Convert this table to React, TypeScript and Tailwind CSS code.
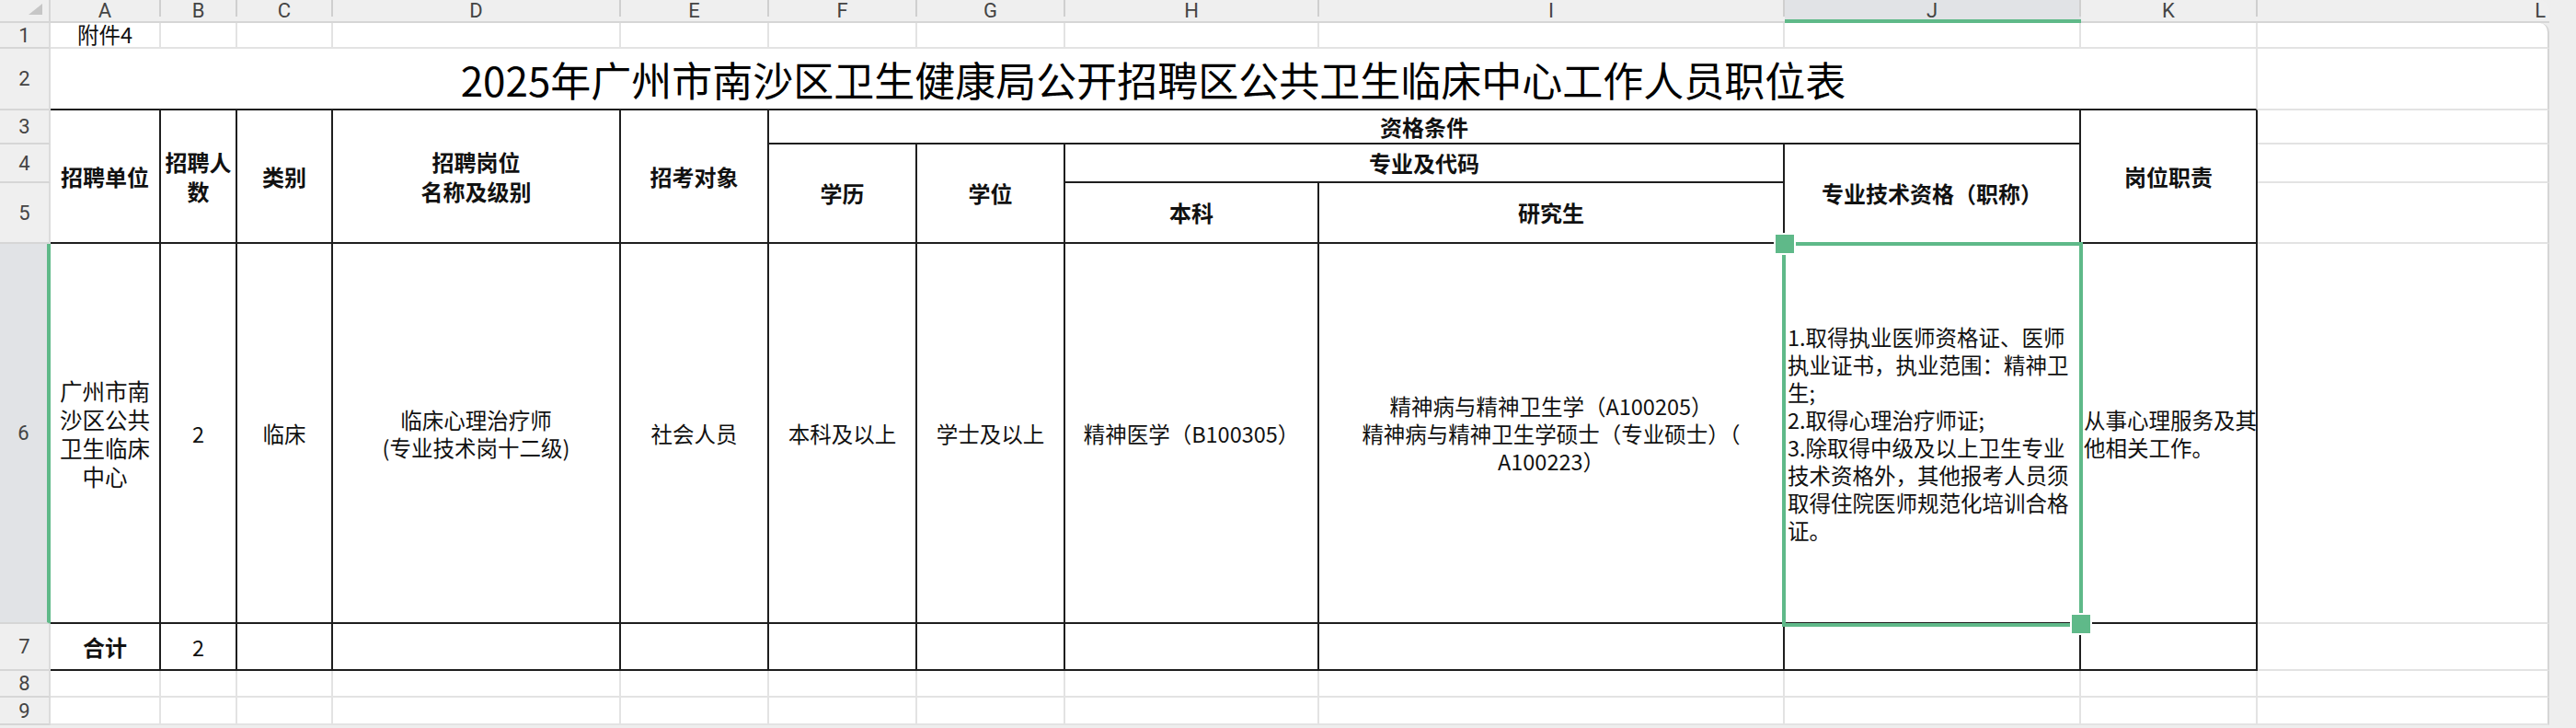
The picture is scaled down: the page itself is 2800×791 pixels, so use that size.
import React from 'react';

const colStart = ['', 'col-start-1', 'col-start-2', 'col-start-3', 'col-start-4', 'col-start-5', 'col-start-6', 'col-start-7', 'col-start-8', 'col-start-9', 'col-start-10', 'col-start-11', 'col-start-12', 'col-start-13', 'col-start-14'];
const rowStart = ['', 'row-start-1', 'row-start-2', 'row-start-3', 'row-start-4', 'row-start-5', 'row-start-6', 'row-start-7', 'row-start-8', 'row-start-9', 'row-start-10', 'row-start-11'];
const colSpan = ['', 'col-span-1', 'col-span-2', 'col-span-3', 'col-span-4', 'col-span-5', 'col-span-6', 'col-span-7', 'col-span-8', 'col-span-9', 'col-span-10', 'col-span-11'];
const rowSpan = ['', 'row-span-1', 'row-span-2', 'row-span-3'];

const letters = ['A', 'B', 'C', 'D', 'E', 'F', 'G', 'H', 'I', 'J', 'K', 'L'];

const head = 'font-bold text-[24px] leading-[32px] text-[#111]';
const data = 'text-[23.5px] leading-[30px] text-[#111]';

type CellProps = {
  c: number;
  r: number;
  cs?: number;
  rs?: number;
  edge?: 'black' | 'grid' | 'title';
  className?: string;
  children?: React.ReactNode;
};

const Cell: React.FC<CellProps> = ({ c, r, cs = 1, rs = 1, edge = 'grid', className = '', children }) => {
  const lines =
    edge === 'black'
      ? 'border-r-2 border-b-2 border-[#1e1e1e]'
      : edge === 'title'
      ? 'border-r-2 border-b-2 border-r-[#e3e3e3] border-b-[#1e1e1e]'
      : 'border-r-2 border-b-2 border-[#e3e3e3]';
  return (
    <div
      className={`${colStart[c]} ${rowStart[r]} ${colSpan[cs]} ${rowSpan[rs]} flex flex-col items-center justify-center text-center bg-white ${lines} ${className}`}
    >
      {children}
    </div>
  );
};

// last visible column (L), cut by the sheet edge
const EdgeCell: React.FC<{ r: number; first?: boolean }> = ({ r, first }) => (
  <div
    className={`col-start-13 ${rowStart[r]} bg-white border-r-2 border-b-2 border-r-[#d5d5d5] border-b-[#e3e3e3] ${
      first ? 'rounded-tr-[10px]' : ''
    }`}
  />
);

const App: React.FC = () => {
  const empty = (r: number, from: number, to: number, edge: 'black' | 'grid') => {
    const out = [];
    for (let c = from; c <= to; c++) out.push(<Cell key={`e-${r}-${c}`} c={c} r={r} edge={edge} />);
    return out;
  };

  return (
    <div className="w-[2800px] h-[791px] overflow-hidden bg-[#eeeeee] grid grid-cols-[55px_120px_83px_104px_313px_161px_161px_161px_276px_506px_322px_192px_317px_29px] grid-rows-[25px_28px_67px_37px_42px_66px_413px_51px_29px_30px_3px] font-['Noto_Sans_CJK_SC','Noto_Sans',sans-serif]">
      {/* corner */}
      <div className="col-start-1 row-start-1 flex items-end justify-end pr-[7px] pb-[7px] bg-[#efefef] border-r-2 border-b-2 border-[#d6d6d6]">
        <svg width="15" height="12" viewBox="0 0 15 12">
          <polygon points="15,0 15,12 0,12" fill="#c6c6c6" />
        </svg>
      </div>

      {/* column letters */}
      {letters.map((l, i) => {
        const selected = l === 'J';
        const last = l === 'L';
        return (
          <div
            key={l}
            className={`${colStart[i + 2]} row-start-1 flex ${
              selected ? 'bg-[#e1e3e6] border-b-4 border-[#5fb989]' : 'bg-[#efefef] border-b-2 border-[#d6d6d6]'
            } ${last ? 'rounded-tr-[10px]' : ''} font-['Roboto',sans-serif] text-[22px] leading-[23px] text-[#444]`}
          >
            <span className={`flex-1 ${last ? 'text-right pr-[4px]' : 'text-center'}`}>{l}</span>
            {!last && <div className="w-[2px] h-[18px] bg-[#cfcfcf]" />}
          </div>
        );
      })}

      {/* row numbers */}
      {[1, 2, 3, 4, 5, 6, 7, 8, 9].map((n) => (
        <div
          key={n}
          className={`col-start-1 ${rowStart[n + 1]} flex items-center justify-center border-b-2 border-b-[#d6d6d6] font-['Roboto',sans-serif] text-[22px] text-[#444] ${
            n === 6 ? 'bg-[#e1e3e6] border-r-4 border-r-[#5fb989]' : 'bg-[#efefef] border-r-2 border-r-[#dcdcdc]'
          }`}
        >
          {n}
        </div>
      ))}

      {/* row 1 */}
      <Cell c={2} r={2} className="text-[23.5px] text-[#111]">附件4</Cell>
      {empty(2, 3, 12, 'grid')}
      <EdgeCell r={2} first />

      {/* row 2 title */}
      <Cell c={2} r={3} cs={11} edge="title" className="text-[44px] leading-[50px] text-black">
        2025年广州市南沙区卫生健康局公开招聘区公共卫生临床中心工作人员职位表
      </Cell>
      <EdgeCell r={3} />

      {/* rows 3-5 header */}
      <Cell c={2} r={4} rs={3} edge="black" className={head}>招聘单位</Cell>
      <Cell c={3} r={4} rs={3} edge="black" className={head}>
        <span>招聘人</span>
        <span>数</span>
      </Cell>
      <Cell c={4} r={4} rs={3} edge="black" className={head}>类别</Cell>
      <Cell c={5} r={4} rs={3} edge="black" className={head}>
        <span>招聘岗位</span>
        <span>名称及级别</span>
      </Cell>
      <Cell c={6} r={4} rs={3} edge="black" className={head}>招考对象</Cell>
      <Cell c={7} r={4} cs={5} edge="black" className={head}>资格条件</Cell>
      <Cell c={12} r={4} rs={3} edge="black" className={head}>岗位职责</Cell>
      <Cell c={7} r={5} rs={2} edge="black" className={head}>学历</Cell>
      <Cell c={8} r={5} rs={2} edge="black" className={head}>学位</Cell>
      <Cell c={9} r={5} cs={2} edge="black" className={head}>专业及代码</Cell>
      <Cell c={11} r={5} rs={2} edge="black" className={head}>专业技术资格（职称）</Cell>
      <Cell c={9} r={6} edge="black" className={head}>本科</Cell>
      <Cell c={10} r={6} edge="black" className={head}>研究生</Cell>
      <EdgeCell r={4} />
      <EdgeCell r={5} />
      <EdgeCell r={6} />

      {/* row 6 data */}
      <Cell c={2} r={7} edge="black" className="text-[24.5px] leading-[31px] text-[#111]">
        <span>广州市南</span>
        <span>沙区公共</span>
        <span>卫生临床</span>
        <span>中心</span>
      </Cell>
      <Cell c={3} r={7} edge="black" className={data}>2</Cell>
      <Cell c={4} r={7} edge="black" className={data}>临床</Cell>
      <Cell c={5} r={7} edge="black" className={data}>
        <span>临床心理治疗师</span>
        <span>(专业技术岗十二级)</span>
      </Cell>
      <Cell c={6} r={7} edge="black" className={data}>社会人员</Cell>
      <Cell c={7} r={7} edge="black" className={data}>本科及以上</Cell>
      <Cell c={8} r={7} edge="black" className={data}>学士及以上</Cell>
      <Cell c={9} r={7} edge="black" className={`${data} whitespace-nowrap`}>精神医学（B100305）</Cell>
      <Cell c={10} r={7} edge="black" className={`${data} whitespace-nowrap`}>
        <span>精神病与精神卫生学（A100205）</span>
        <span>精神病与精神卫生学硕士（专业硕士）（</span>
        <span>A100223）</span>
      </Cell>
      <Cell c={11} r={7} edge="black" className={`${data} relative !items-start text-left pl-[3px] whitespace-nowrap`}>
        <span>1.取得执业医师资格证、医师</span>
        <span>执业证书，执业范围：精神卫</span>
        <span>生;</span>
        <span>2.取得心理治疗师证;</span>
        <span>3.除取得中级及以上卫生专业</span>
        <span>技术资格外，其他报考人员须</span>
        <span>取得住院医师规范化培训合格</span>
        <span>证。</span>
        {/* selection frame */}
        <div className="absolute -left-[3px] -top-[2px] -right-[4px] -bottom-[5px] border-4 border-[#5fb989] z-10 pointer-events-none" />
        <div className="absolute -left-[12px] -top-[12px] w-[24px] h-[24px] bg-[#5fb989] border-2 border-white z-20" />
        <div className="absolute -right-[14px] -bottom-[14px] w-[24px] h-[24px] bg-[#5fb989] border-2 border-white z-20" />
      </Cell>
      <Cell c={12} r={7} edge="black" className={`${data} !items-start text-left pl-[3px] whitespace-nowrap`}>
        <span>从事心理服务及其</span>
        <span>他相关工作。</span>
      </Cell>
      <EdgeCell r={7} />

      {/* row 7 total */}
      <Cell c={2} r={8} edge="black" className={head}>合计</Cell>
      <Cell c={3} r={8} edge="black" className={data}>2</Cell>
      {empty(8, 4, 12, 'black')}
      <EdgeCell r={8} />

      {/* rows 8-9 */}
      {empty(9, 2, 12, 'grid')}
      <EdgeCell r={9} />
      {empty(10, 2, 12, 'grid')}
      <EdgeCell r={10} />
    </div>
  );
};

export default App;
